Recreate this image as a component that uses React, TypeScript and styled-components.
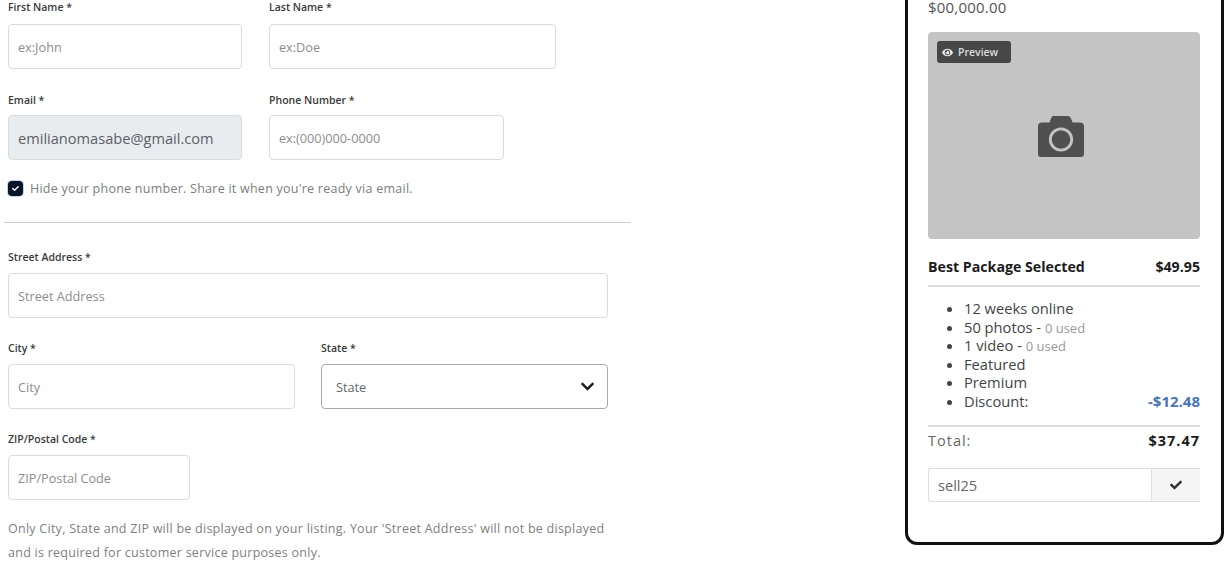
import React from "react";
import styled, { createGlobalStyle } from "styled-components";
import { FaCheck, FaChevronDown, FaEye } from "react-icons/fa";

const Global = createGlobalStyle`
  html, body { margin: 0; padding: 0; background: #fff; height: 574px; overflow: hidden; }
  body { font-family: "Open Sans", "Liberation Sans", sans-serif; color: #333; }
  * { box-sizing: border-box; }
`;

const Page = styled.div`
  display: flex;
  align-items: flex-start;
  width: 1226px;
  height: 574px;
  overflow: hidden;
`;
const FormColumn = styled.form`
  width: 631px;
  padding: 0 0 0 4px;
  flex: none;
`;
const Group = styled.div<{ $gap: number }>`
  padding-left: 4px;
  display: flex;
  flex-direction: column;
  gap: ${(p) => p.$gap}px;
`;
const Row = styled.div<{ $gap?: number }>`
  display: flex;
  gap: ${(p) => p.$gap ?? 27}px;
`;
const Field = styled.label<{ $w: number }>`
  display: flex;
  flex-direction: column;
  width: ${(p) => p.$w}px;
`;
const LabelText = styled.span<{ $h?: number }>`
  font-size: 10.5px;
  font-weight: 600;
  line-height: 14px;
  height: ${(p) => p.$h ?? 23}px;
  color: #3a3a3a;
`;
const Input = styled.input<{ $filled?: boolean }>`
  width: 100%;
  height: 45px;
  border: 1px solid #d9dbdd;
  border-radius: 4px;
  padding: 0 9px;
  font-family: inherit;
  font-size: ${(p) => (p.$filled ? "14.6px" : "12.7px")};
  color: #5b6166;
  background: ${(p) => (p.$filled ? "#e9ecef" : "#fff")};
  outline: none;
  &::placeholder { color: #8d8d8d; opacity: 1; }
`;
const CheckRow = styled.div`
  display: flex;
  align-items: center;
  gap: 7px;
  height: 16px;
  margin-top: -4px;
  font-size: 12.5px;
  letter-spacing: 0.25px;
  color: #7d7d7d;
`;
const CheckBox = styled.span`
  width: 15px;
  height: 15px;
  border-radius: 4px;
  background: #0a1428;
  box-shadow: 0 0 0 1px #b9d4f2;
  display: inline-flex;
  align-items: center;
  justify-content: center;
  color: #fff;
  font-size: 7px;
`;
const Divider = styled.hr`
  border: 0;
  border-top: 1px solid #cfcfcf;
  margin: 26px 0 27px;
`;
const SelectWrap = styled.div`
  position: relative;
  height: 45px;
`;
const Select = styled.select`
  width: 100%;
  height: 45px;
  appearance: none;
  border: 1px solid #a9a9a9;
  border-radius: 4px;
  padding: 0 14px;
  font-family: inherit;
  font-size: 12.7px;
  color: #666;
  background: #fff;
  outline: none;
`;
const Chevron = styled.span`
  position: absolute;
  right: 13px;
  top: 15px;
  font-size: 15px;
  line-height: 15px;
  color: #1a1a1a;
  pointer-events: none;
`;
const Help = styled.p`
  margin: 17px 0 0;
  padding-left: 4px;
  font-size: 12.5px;
  letter-spacing: 0.26px;
  line-height: 24px;
  color: #808080;
  width: 610px;
`;

const Card = styled.aside`
  flex: none;
  width: 319px;
  height: 600px;
  margin: -55px 0 0 274px;
  border: 3px solid #111;
  border-radius: 12px;
  padding: 52px 21px 0 20px;
`;
const Price = styled.div`
  font-size: 15px;
  line-height: 14px;
  color: #555;
  letter-spacing: 0.2px;
`;
const Photo = styled.div`
  position: relative;
  margin-top: 18px;
  height: 207px;
  border-radius: 4px;
  background: #c4c4c4;
  display: flex;
  align-items: center;
  justify-content: center;
`;
const CameraIcon = styled.svg`
  width: 48px;
  height: 42px;
  margin-right: 6px;
  margin-top: 3px;
`;
const Badge = styled.div`
  position: absolute;
  left: 9px;
  top: 9px;
  width: 74px;
  height: 22px;
  border-radius: 3px;
  background: #474747;
  color: #ddd;
  display: flex;
  align-items: center;
  gap: 5px;
  padding-left: 5px;
  font-size: 10.5px;
  font-weight: 600;
  svg { font-size: 11px; color: #eee; }
`;
const PackageRow = styled.div`
  display: flex;
  justify-content: space-between;
  align-items: center;
  height: 48px;
  padding-top: 9px;
  border-bottom: 2px solid #dcdcdc;
  font-size: 14.2px;
  font-weight: 700;
  color: #1c1c1c;
`;
const Features = styled.ul`
  list-style: disc;
  margin: 12px 0 0;
  padding: 0 0 0 36px;
  font-size: 14.7px;
  line-height: 18.4px;
  color: #444;
`;
const FeatureRow = styled.li`
  position: relative;
  height: 18.6px;
`;
const Used = styled.span`
  font-size: 13px;
  line-height: 1;
  color: #999;
`;
const Discount = styled.span`
  position: absolute;
  right: 0;
  top: 0;
  font-weight: 700;
  font-size: 15px;
  color: #4a74b8;
`;
const TotalRow = styled.div`
  display: flex;
  justify-content: space-between;
  align-items: center;
  margin-top: 14px;
  height: 30px;
  border-top: 2px solid #dcdcdc;
  font-size: 14.5px;
  letter-spacing: 1px;
  color: #666;
  b { color: #1c1c1c; font-weight: 700; }
`;
const Coupon = styled.div`
  display: flex;
  height: 34px;
  margin-top: 13px;
  border: 1px solid #dedede;
  border-right: 0;
  border-radius: 3px 0 0 3px;
`;
const CouponInput = styled.input`
  flex: 1;
  min-width: 0;
  border: 0;
  padding: 0 9px;
  font-family: inherit;
  font-size: 14.6px;
  color: #666;
  outline: none;
  background: transparent;
`;
const CouponButton = styled.button`
  width: 49px;
  border: 0;
  border-left: 1px solid #dedede;
  background: #f5f5f5;
  color: #333;
  font-size: 12px;
  display: flex;
  align-items: center;
  justify-content: center;
  padding: 0;
`;

export default function App() {
  return (
    <Page>
      <Global />
      <FormColumn>
        <Group $gap={24}>
          <Row>
            <Field $w={234}>
              <LabelText $h={24}>First Name *</LabelText>
              <Input placeholder="ex:John" />
            </Field>
            <Field $w={287}>
              <LabelText $h={24}>Last Name *</LabelText>
              <Input placeholder="ex:Doe" />
            </Field>
          </Row>
          <Row>
            <Field $w={234}>
              <LabelText $h={22}>Email *</LabelText>
              <Input $filled value="emilianomasabe@gmail.com" readOnly />
            </Field>
            <Field $w={235}>
              <LabelText $h={22}>Phone Number *</LabelText>
              <Input placeholder="ex:(000)000-0000" />
            </Field>
          </Row>
          <CheckRow>
            <CheckBox><FaCheck /></CheckBox>
            Hide your phone number. Share it when you're ready via email.
          </CheckRow>
        </Group>
        <Divider />
        <Group $gap={23}>
          <Row>
            <Field $w={600}>
              <LabelText>Street Address *</LabelText>
              <Input placeholder="Street Address" />
            </Field>
          </Row>
          <Row $gap={26}>
            <Field $w={287}>
              <LabelText>City *</LabelText>
              <Input placeholder="City" />
            </Field>
            <Field $w={287}>
              <LabelText>State *</LabelText>
              <SelectWrap>
                <Select defaultValue="">
                  <option value="">State</option>
                </Select>
                <Chevron><FaChevronDown /></Chevron>
              </SelectWrap>
            </Field>
          </Row>
          <Row>
            <Field $w={182}>
              <LabelText>ZIP/Postal Code *</LabelText>
              <Input placeholder="ZIP/Postal Code" />
            </Field>
          </Row>
        </Group>
        <Help>
          Only City, State and ZIP will be displayed on your listing. Your 'Street Address' will not be displayed and is required for customer service purposes only.
        </Help>
      </FormColumn>
      <Card>
        <Price>$00,000.00</Price>
        <Photo>
          <Badge><FaEye />Preview</Badge>
          <CameraIcon viewBox="0 0 48 42" aria-hidden="true">
            <path
              d="M16 0h15a3 3 0 0 1 2.8 1.9L35.6 6.5H43a4 4 0 0 1 4 4V38a3 3 0 0 1-3 3H4a3 3 0 0 1-3-3V10.5a4 4 0 0 1 4-4h7.6l1.6-4.6A3 3 0 0 1 16 0z"
              fill="#505050"
            />
            <circle cx="24" cy="23.5" r="10.7" fill="none" stroke="#c4c4c4" strokeWidth="2.8" />
          </CameraIcon>
        </Photo>
        <PackageRow>
          <span>Best Package Selected</span>
          <span>$49.95</span>
        </PackageRow>
        <Features>
          <FeatureRow>12 weeks online</FeatureRow>
          <FeatureRow>50 photos - <Used>0 used</Used></FeatureRow>
          <FeatureRow>1 video - <Used>0 used</Used></FeatureRow>
          <FeatureRow>Featured</FeatureRow>
          <FeatureRow>Premium</FeatureRow>
          <FeatureRow>Discount:<Discount>-$12.48</Discount></FeatureRow>
        </Features>
        <TotalRow>
          <span>Total:</span>
          <b>$37.47</b>
        </TotalRow>
        <Coupon>
          <CouponInput defaultValue="sell25" />
          <CouponButton type="button"><FaCheck /></CouponButton>
        </Coupon>
      </Card>
    </Page>
  );
}
